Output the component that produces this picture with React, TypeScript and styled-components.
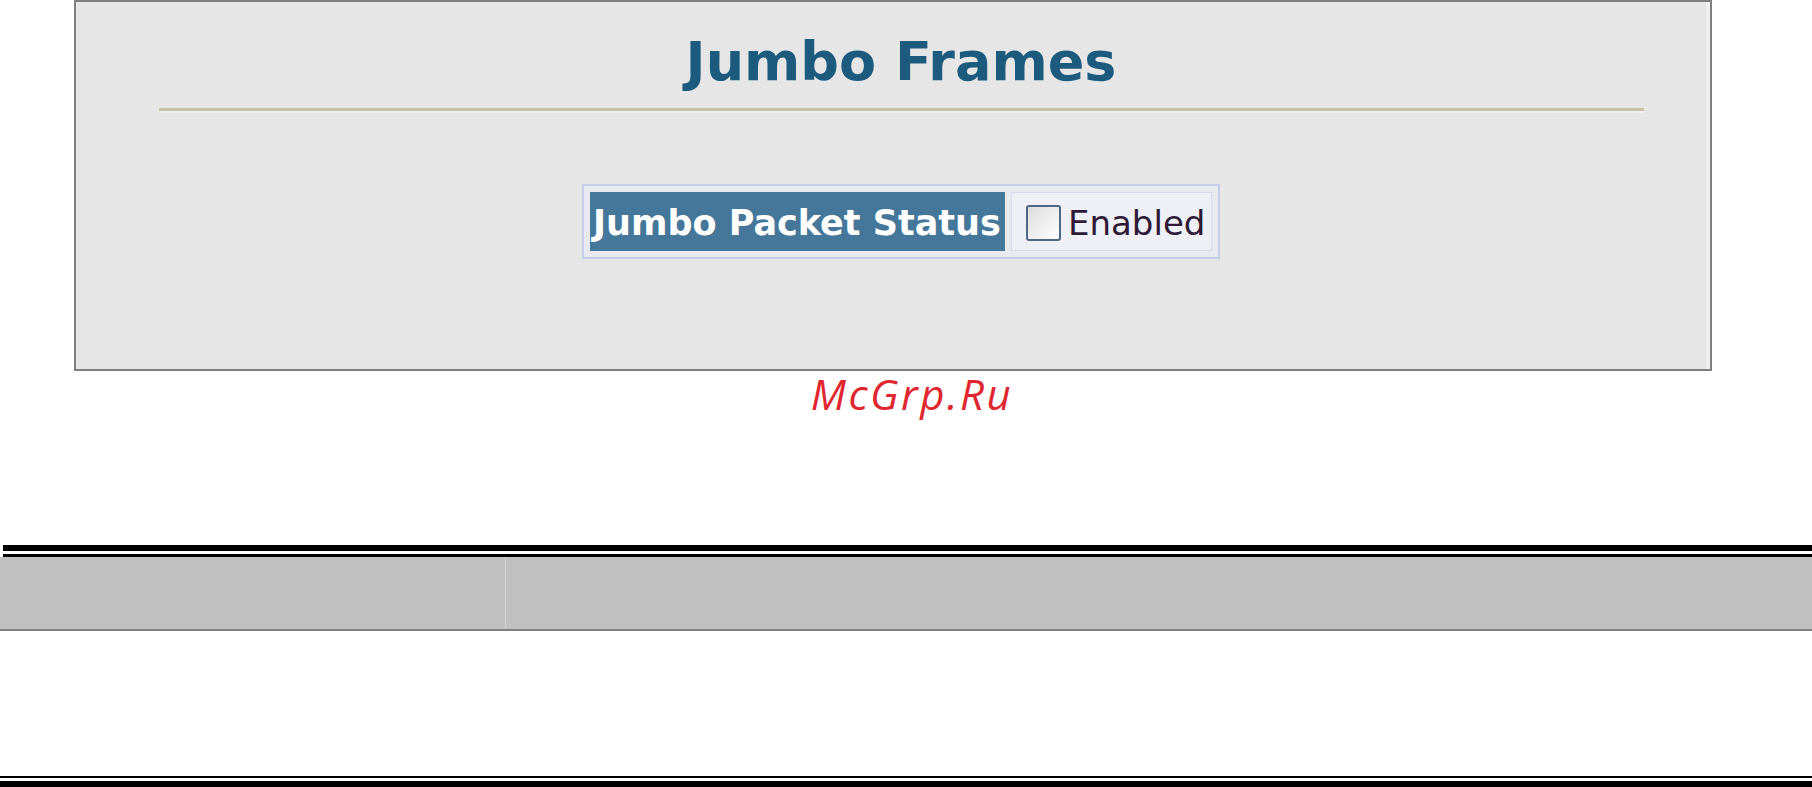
import styled, { createGlobalStyle } from "styled-components";

const GlobalStyle = createGlobalStyle`
  html, body {
    margin: 0;
    padding: 0;
    background: #ffffff;
  }
  body {
    font-family: "DejaVu Sans", Verdana, sans-serif;
  }
`;

const StyledPage = styled.div`
  width: 1812px;
  height: 787px;
  display: flex;
  flex-direction: column;
  overflow: hidden;
`;

const StyledPanel = styled.div`
  box-sizing: border-box;
  margin-left: 74px;
  width: 1638px;
  height: 371px;
  border: 2px solid #7f7f7f;
  background: #e6e6e6;
  box-shadow: inset -4px 0 0 #efefef;
  display: flex;
  flex-direction: column;
  align-items: center;
  padding: 28px 0 0 16px;
`;

const StyledTitle = styled.h1`
  margin: 0;
  font-family: "DejaVu Sans", Verdana, sans-serif;
  font-weight: bold;
  font-size: 54px;
  line-height: 64px;
  color: #1c5a7e;
`;

const StyledRule = styled.div`
  width: 1485px;
  height: 3px;
  margin-top: 14px;
  background: #c8c2a8;
  box-shadow: 0 2px 0 #efefef;
`;

const StyledTable = styled.div`
  display: flex;
  gap: 6px;
  margin-top: 73px;
  padding: 6px;
  border: 2px solid #c4cee7;
  background: #e9eaf0;
`;

const StyledHeadCell = styled.div`
  box-sizing: border-box;
  width: 415px;
  height: 59px;
  padding: 2px 0 0 3px;
  display: flex;
  align-items: center;
  background: #44779a;
  color: #ffffff;
  font-weight: bold;
  font-size: 35px;
  white-space: nowrap;
`;

const StyledValueCell = styled.label`
  box-sizing: border-box;
  width: 201px;
  height: 59px;
  padding: 2px 0 0 14px;
  display: flex;
  align-items: center;
  gap: 7px;
  border: 1px solid #d3daeb;
  background: #eef0f5;
  color: #2e1a36;
  font-size: 34px;
`;

const StyledCheck = styled.span<{ $checked?: boolean }>`
  box-sizing: border-box;
  width: 35px;
  height: 36px;
  border: 2px solid #4d6784;
  border-radius: 3px;
  background: ${(p) =>
    p.$checked ? "#4d6784" : "linear-gradient(135deg, #dcdcdc, #ffffff)"};
`;

const StyledWatermark = styled.div`
  padding-left: 12px;
  text-align: center;
  font-family: "Open Sans", sans-serif;
  font-style: italic;
  font-size: 42px;
  letter-spacing: 2.5px;
  line-height: 46px;
  color: #e0262e;
`;

const StyledDoc = styled.div`
  margin-top: 128px;
  display: flex;
  flex-direction: column;
`;

// double rule: thick over thin
const StyledTopRule = styled.div`
  margin-left: 3px;
  height: 3px;
  border-top: 6px solid #000;
  border-bottom: 3px solid #000;
`;

const StyledHeadRow = styled.div`
  display: grid;
  grid-template-columns: 506px 1fr;
  height: 72px;
  background: #c0c0c0;
  border-bottom: 2px solid #808080;
`;

const StyledDocCell = styled.div<{ $divider?: boolean }>`
  border-right: ${(p) => (p.$divider ? "1px solid #d6d6d6" : "none")};
`;

const StyledBody = styled.div`
  height: 145px;
`;

// double rule: thin over thick
const StyledBottomRule = styled.div`
  height: 3px;
  border-top: 2px solid #000;
  border-bottom: 6px solid #000;
`;

export default function App() {
  return (
    <StyledPage>
      <GlobalStyle />
      <StyledPanel>
        <StyledTitle>Jumbo Frames</StyledTitle>
        <StyledRule />
        <StyledTable>
          <StyledHeadCell>Jumbo Packet Status</StyledHeadCell>
          <StyledValueCell>
            <StyledCheck />
            Enabled
          </StyledValueCell>
        </StyledTable>
      </StyledPanel>

      <StyledWatermark>McGrp.Ru</StyledWatermark>

      <StyledDoc>
        <StyledTopRule />
        <StyledHeadRow>
          <StyledDocCell $divider />
          <StyledDocCell />
        </StyledHeadRow>
        <StyledBody />
        <StyledBottomRule />
      </StyledDoc>
    </StyledPage>
  );
}
